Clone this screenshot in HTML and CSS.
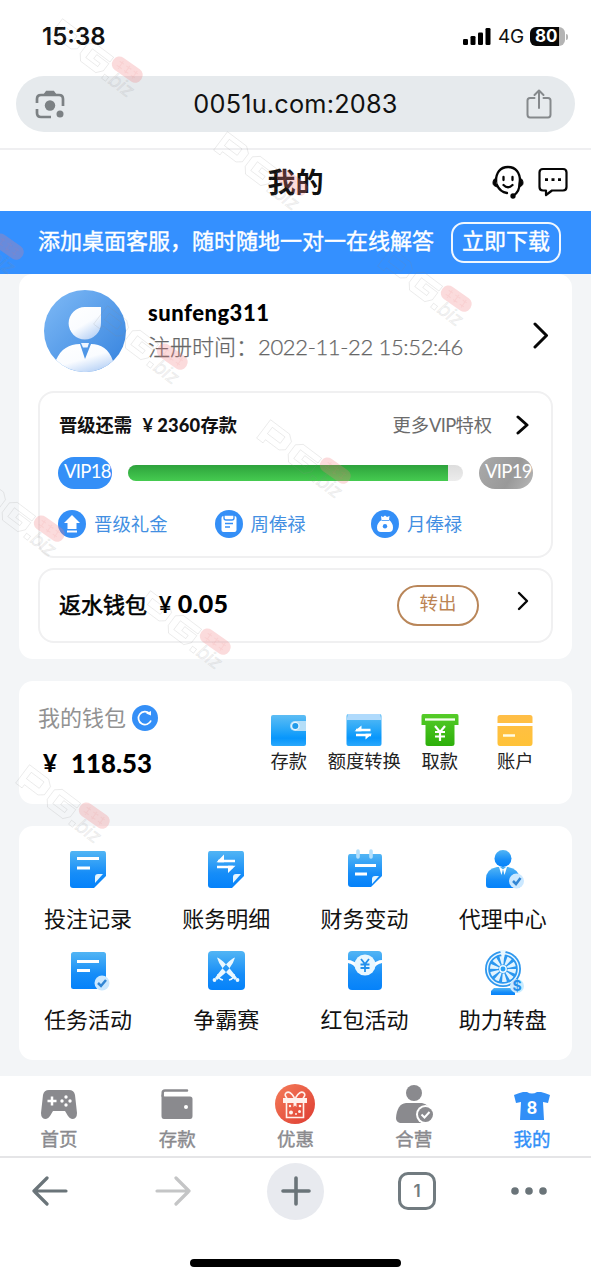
FILE: index.html
```html
<!DOCTYPE html>
<html lang="zh-CN">
<head>
<meta charset="utf-8">
<meta name="viewport" content="width=device-width, initial-scale=1">
<title>我的</title>
<link rel="stylesheet" href="styles.css">
</head>
<body>
<svg class="defs" width="0" height="0" aria-hidden="true">
  <defs>
    <linearGradient id="blue" x1="0" y1="0" x2="0" y2="1"><stop offset="0" stop-color="#52b5f4"/><stop offset=".6" stop-color="#168df8"/><stop offset="1" stop-color="#0582fa"/></linearGradient>
    <linearGradient id="sky" x1="0" y1="0" x2="0" y2="1"><stop offset="0" stop-color="#5dbdf4"/><stop offset=".45" stop-color="#2aa8f8"/><stop offset=".75" stop-color="#0796fc"/><stop offset="1" stop-color="#2ba8fb"/></linearGradient>
    <linearGradient id="green" x1="0" y1="0" x2="0" y2="1"><stop offset="0" stop-color="#55cc28"/><stop offset="1" stop-color="#2daf0b"/></linearGradient>
    <linearGradient id="gold" x1="0" y1="0" x2="0" y2="1"><stop offset="0" stop-color="#ffbe47"/><stop offset="1" stop-color="#ffc238"/></linearGradient>
    <linearGradient id="avatarBg" x1="0" y1="0" x2="1" y2="1"><stop offset="0" stop-color="#7fbaf6"/><stop offset="1" stop-color="#3482de"/></linearGradient>
    <linearGradient id="pale" x1="0" y1="0" x2=".6" y2="1"><stop offset="0" stop-color="#fff"/><stop offset=".6" stop-color="#fafcff"/><stop offset="1" stop-color="#bed6f7"/></linearGradient>
    <linearGradient id="red" x1="0" y1="0" x2="1" y2="1"><stop offset="0" stop-color="#f47c59"/><stop offset="1" stop-color="#de3c32"/></linearGradient>
  </defs>
</svg>

<header class="status">
  <span class="clock">15:38</span>
  <span class="signal"><svg width="28" height="18" viewBox="0 0 28 18"><rect x="0" y="11" width="5" height="6" rx="1.3"/><rect x="7.500" y="8" width="5" height="9" rx="1.3"/><rect x="15" y="4.500" width="5" height="12.500" rx="1.3"/><rect x="22.500" y="0" width="5" height="17" rx="1.3"/></svg></span>
  <span class="net">4G</span>
  <span class="battery">80</span><i class="nub"></i>
</header>

<div class="address">
  <svg width="30" height="30" viewBox="0 0 30 30" fill="none" stroke="#7c8184" stroke-width="2.700"><path d="M2 14V10Q2 6 6 6H24Q28 6 28 10V17M2 20V24Q2 28 6 28H16"/><path d="M9 6L11.500 2.500H18.500L21 6Z" fill="#7c8184" stroke-width="1.500"/><circle cx="15" cy="16.500" r="5.200" fill="#7c8184" stroke="none"/><circle cx="25" cy="25" r="3.500" fill="#7c8184" stroke="none"/></svg>
  <span class="url">0051u.com:2083</span>
  <svg width="26" height="30" viewBox="0 0 26 30" fill="none" stroke="#85898c" stroke-width="2" stroke-linecap="round" stroke-linejoin="round"><path d="M8.500 9H4Q1.500 9 1.500 11.500V25.500Q1.500 28.500 4 28.500H22Q24.500 28.500 24.500 25.500V11.500Q24.500 9 22 9H17.500M13 19V2M8.500 6L13 1.500L17.500 6"/></svg>
</div>

<div class="title-bar">
  <h1>我的</h1>
  <div class="title-icons">
    <svg width="32" height="34" viewBox="0 0 32 34" fill="none" stroke="#050505" stroke-width="2.300" stroke-linecap="round"><path d="M4 16C4 8 8 2 16 2S28 8 28 16C28 23 26 28 21 31"/><path d="M4 13C1.500 14 1 16 1 18S2 21 5 22ZM28 13C30.500 14 31 16 31 18S30 21 27 22Z" fill="#050505" stroke-width="1"/><path d="M5 20Q8 27 15 28M11.500 12V15M20.500 12V15M11.500 20Q16 24.500 20.500 20"/><circle cx="21" cy="31" r="1.500" fill="#050505"/></svg>
    <svg width="30" height="30" viewBox="0 0 30 30" fill="none" stroke="#050505" stroke-width="2.200" stroke-linejoin="round"><path d="M5 2H25Q28.500 2 28.500 5.500V20Q28.500 23.500 25 23.500H14L8 28V23.500H5Q1.500 23.500 1.500 20V5.500Q1.500 2 5 2Z"/><path d="M7 12.700h3M13.500 12.700h3M20 12.700h3" stroke-width="2.800"/></svg>
  </div>
</div>

<div class="banner"><span>添加桌面客服，随时随地一对一在线解答</span><a class="download">立即下载</a></div>

<main class="page">
  <section class="card account">
    <div class="profile">
      <svg width="82" height="82" viewBox="0 0 82 82"><circle cx="41" cy="41" r="41" fill="url(#avatarBg)"/><path d="M41 17H57V33A16.200 16.200 0 1 1 41 17Z" fill="url(#pale)"/><path d="M12 70C17 59 25 54 36 54L41 69L47 54C57 54 65 59 69 71A41 41 0 0 1 12 70Z" fill="url(#pale)"/><path d="M37 53H45L43.500 57.500H39Z" fill="#eef5ff"/></svg>
      <div class="who"><strong>sunfeng311</strong><span>注册时间：<b>2022-11-22 15:52:46</b></span></div>
      <svg class="chev" width="16" height="27" viewBox="0 0 16 27"><path d="M2 2L13.500 13.500L2 25"/></svg>
    </div>
    <div class="box vip">
      <div class="vip-head"><strong>晋级还需 <i class="yen">¥</i><b>2360</b>存款</strong><span>更多<b>VIP</b>特权</span><svg class="chev" width="14" height="20" viewBox="0 0 14 20"><path d="M2 2L11 10L2 18"/></svg></div>
      <div class="vip-bar"><span class="level">VIP18</span><div class="track"><div class="fill"></div></div><span class="level next">VIP19</span></div>
      <div class="perks">
        <div><svg width="28" height="28" viewBox="0 0 28 28"><circle cx="14" cy="14" r="14" fill="#348ff7"/><path d="M14 5L22 13H18.500V19H9.500V13H6Z" fill="#fff"/><path d="M9 21.500H19" stroke="#fff" stroke-width="2"/></svg>晋级礼金</div>
        <div><svg width="28" height="28" viewBox="0 0 28 28"><circle cx="14" cy="14" r="14" fill="#348ff7"/><rect x="6.500" y="6" width="15" height="16" rx="2" fill="#fff"/><path d="M9 5H19V8Q19 10 17 10H11Q9 10 9 8Z" fill="#fff" stroke="#348ff7" stroke-width="1.300"/><path d="M10 13.500H18M10 17H15" stroke="#348ff7" stroke-width="1.500"/></svg>周俸禄</div>
        <div><svg width="28" height="28" viewBox="0 0 28 28"><circle cx="14" cy="14" r="14" fill="#348ff7"/><path d="M10 6L12 7L14 5.500L16 7L18.500 6L18 10Q22 13 22 17.500Q22 22 18 22H10Q6 22 6 17.500Q6 13 10.500 10Z" fill="#fff"/><path d="M10.500 10.500H18" stroke="#348ff7" stroke-width=".8"/><circle cx="14" cy="16.300" r="2.200" fill="#348ff7"/></svg>月俸禄</div>
      </div>
    </div>
    <div class="box rebate"><strong>返水钱包 <i class="yen">¥</i><b>0.05</b></strong><a class="transfer">转出</a><svg class="chev thin" width="12" height="20" viewBox="0 0 12 20"><path d="M2 2L10 10L2 18"/></svg></div>
  </section>

  <section class="card wallet">
    <div class="balance">
      <div class="wallet-name">我的钱包<svg width="26" height="26" viewBox="0 0 26 26"><circle cx="13" cy="13" r="13" fill="#348ff7"/><path d="M17.500 8.500A6.500 6.500 0 1 0 19 15.500" fill="none" stroke="#fff" stroke-width="1.700"/><path d="M14 8.500L19 6V10.500Z" fill="#fff"/></svg></div>
      <div class="amount"><span>¥</span>118.53</div>
    </div>
    <div class="actions">
      <div><svg width="38" height="34" viewBox="0 0 38 34"><rect x="1" y="2" width="35" height="31" rx="2" fill="url(#sky)"/><path d="M36 8H25A5 5 0 0 0 25 18H36Z" fill="#b5def8"/><circle cx="25.300" cy="13" r="3.700" fill="#229bea" stroke="#e6f6ff" stroke-width="1.300"/></svg>存款</div>
      <div><svg width="38" height="34" viewBox="0 0 38 34"><rect x="1.500" y="1" width="35" height="32" rx="2" fill="url(#sky)"/><path d="M3 1H35L36.500 7H1.500Z" fill="#afdafc"/><path d="M25.500 17H11M11 22H26" stroke="#fff" stroke-width="2.500"/><path d="M9.500 18.200L16.500 12.500V18.200ZM27 20.800L20.500 26.500V20.800Z" fill="#fff"/></svg>额度转换</div>
      <div><svg width="38" height="34" viewBox="0 0 38 34"><path d="M2 1H36Q37.500 1 37.500 3V12H33.500V31Q33.500 33 31 33H7Q4.500 33 4.500 31V12H.5V3Q.5 1 2 1Z" fill="url(#green)"/><path d="M4 6.500H34" stroke="#f3ffed" stroke-width="2.300"/><path d="M14 13L19 19L24 13M14 19H24M14 23.500H24M19 19V28" fill="none" stroke="#fff" stroke-width="2.200"/></svg>取款</div>
      <div><svg width="38" height="34" viewBox="0 0 38 34"><path d="M4 2H34Q36.500 2 36.500 4.500V10H1.500V4.500Q1.500 2 4 2ZM1.500 13H36.500V30Q36.500 33 34 33H4Q1.500 33 1.500 30Z" fill="url(#gold)"/><path d="M7 22.500H19" stroke="#fffbe2" stroke-width="2.500"/></svg>账户</div>
    </div>
  </section>

  <section class="card menu">
    <div class="item"><svg width="44" height="44" viewBox="0 0 44 44"><path d="M6 3H38Q40 3 40 6V28L28 40H7Q4 40 4 37V6Q4 3 6 3Z" fill="url(#blue)"/><path d="M29 35V29Q29 26 32 26H37Z" fill="#e4f5ff"/><path d="M11 10.500H33M11 20H24" stroke="#fff" stroke-width="3"/></svg>投注记录</div>
    <div class="item"><svg width="44" height="44" viewBox="0 0 44 44"><path d="M6 3H38Q40 3 40 6V28L28 40H7Q4 40 4 37V6Q4 3 6 3Z" fill="url(#blue)"/><path d="M29 35V29Q29 26 32 26H37Z" fill="#e4f5ff"/><path d="M14 13H31M13 19H29" stroke="#fff" stroke-width="2.700"/><path d="M12.500 14.300L20 6.500V14.300ZM31.500 17.700L24 25V17.700Z" fill="#fff"/></svg>账务明细</div>
    <div class="item"><svg width="44" height="44" viewBox="0 0 44 44"><path d="M7 6H37Q39 6 39 9V28L28 39H8Q5 39 5 36V9Q5 6 7 6Z" fill="url(#blue)"/><path d="M15 3V9M28 3V9" stroke="#b5e0fc" stroke-width="3.600" stroke-linecap="round"/><path d="M29 36V31Q29 28 32 28H36Z" fill="#e4f5ff"/><path d="M12 17.500H33M12 26H24" stroke="#fff" stroke-width="3"/></svg>财务变动</div>
    <div class="item"><svg width="44" height="44" viewBox="0 0 44 44"><circle cx="22" cy="10.500" r="8.500" fill="url(#blue)"/><path d="M5 37V31Q5 21 16 19H27Q38 21 39 31V38Q39 40 37 40H8Q5 40 5 37Z" fill="url(#blue)"/><path d="M18 19L20.500 27L22 21L23.500 27L26 19H25L22.700 21H21.300L19 19Z" fill="#fff"/><circle cx="35.500" cy="33" r="7.500" fill="#cbe8ff"/><path d="M32 33L35 36L39.500 30" fill="none" stroke="#3286d4" stroke-width="2.500"/></svg>代理中心</div>
    <div class="item"><svg width="44" height="44" viewBox="0 0 44 44"><rect x="5" y="3" width="35" height="37" rx="2.500" fill="url(#blue)"/><path d="M11 12.500H33M11 21.500H24" stroke="#fff" stroke-width="3"/><circle cx="36" cy="34" r="7.500" fill="#cbe8ff"/><path d="M32 34L35 37L40 31" fill="none" stroke="#3286d4" stroke-width="2.500"/></svg>任务活动</div>
    <div class="item"><svg width="44" height="44" viewBox="0 0 44 44"><rect x="4" y="2" width="37" height="39" rx="4" fill="url(#blue)"/><path d="M13 8.500Q20 11 33 29L31 31Q16 20 13 8.500ZM31 8.500Q24 11 11 29L13 31Q28 20 31 8.500Z" fill="#eaf8ff"/><path d="M14 25Q14 30 19 31M30 25Q30 30 25 31" fill="none" stroke="#eaf8ff" stroke-width="1.500"/><circle cx="10.500" cy="31" r="1.900" fill="#eaf8ff"/><circle cx="33.500" cy="31" r="1.900" fill="#eaf8ff"/></svg>争霸赛</div>
    <div class="item"><svg width="44" height="44" viewBox="0 0 44 44"><rect x="5" y="2" width="34" height="39" rx="4" fill="url(#blue)"/><path d="M5 11C9 11 11 13 13 14V19C10 16 9 15 5 14ZM39 11C35 11 33 13 31 14V19C34 16 35 15 39 14Z" fill="#fff"/><circle cx="22" cy="16" r="10.500" fill="#eaf8ff"/><path d="M18 10L22 15L26 10M17.500 15.500H26.500M17.500 19H26.500M22 15V23" fill="none" stroke="#2490ec" stroke-width="1.800"/></svg>红包活动</div>
    <div class="item"><svg width="44" height="48" viewBox="0 0 44 48"><circle cx="22" cy="20" r="18" fill="#2f98ee"/><circle cx="22" cy="20" r="15.500" fill="#2b97ef" stroke="#eaf7ff" stroke-width="1.400"/><circle cx="22" cy="20" r="8.800" fill="none" stroke="#e2f4ff" stroke-width="8.500" stroke-dasharray="3.330 2.200"/><circle cx="22" cy="20" r="3.200" fill="#2ba0f4" stroke="#e9f7ff" stroke-width="1.500"/><path d="M19 1H25L23 9H21Z" fill="#eaf8ff"/><path d="M13 39H31L34 42V46H10V42Z" fill="url(#blue)"/><circle cx="36" cy="37" r="7" fill="#caebff"/><text x="36" y="42" text-anchor="middle" font-size="14" font-weight="700" font-family="Inter, sans-serif" fill="#268fea">$</text></svg>助力转盘</div>
  </section>
</main>

<nav class="tabs">
  <a><svg width="40" height="40" viewBox="0 0 40 40"><path d="M10 6H30Q35 6 36 11L38 29Q38 35 33 35Q31 35 29 32L26 27H14L11 32Q9 35 7 35Q2 35 2 29L4 11Q5 6 10 6Z" fill="#8a8a8e"/><path d="M13 12.500V21.500M8.500 17H17.500" stroke="#fff" stroke-width="2.500"/><g fill="#fff"><circle cx="27" cy="13" r="1.700"/><circle cx="23" cy="17" r="1.700"/><circle cx="31" cy="17" r="1.700"/><circle cx="27" cy="21" r="1.700"/></g></svg>首页</a>
  <a><svg width="40" height="40" viewBox="0 0 40 40"><path d="M30 6.500H8Q5.700 6.500 5.700 9V12" fill="none" stroke="#8a8a8e" stroke-width="2.500" stroke-linecap="round"/><path d="M4.500 10Q5 12.500 8 12.500H33Q35.500 12.500 35.500 15V32Q35.500 35 33 35H7Q4.500 35 4.500 32Z" fill="#8a8a8e"/><circle cx="29" cy="23" r="2" fill="#fff"/></svg>存款</a>
  <a><svg width="40" height="40" viewBox="0 0 40 40"><circle cx="20" cy="20" r="20" fill="url(#red)"/><rect x="8" y="14" width="24" height="5" fill="#fff1ec"/><path d="M19.500 14Q15 6 11 9Q9 11 12 14M20.500 14Q25 6 29 9Q31 11 28 14M11.500 19V33.500H28.500V19" fill="none" stroke="#fff1ec" stroke-width="1.600"/><path d="M18.500 18H21.500V23L20 21.500L18.500 23Z" fill="#fff1ec"/><g fill="#fff1ec"><circle cx="15" cy="22" r="1.200"/><circle cx="25" cy="22" r="1.300"/><circle cx="16" cy="28.500" r="2"/><circle cx="21" cy="30" r="1"/><circle cx="24.500" cy="27.500" r="1.500"/></g></svg>优惠</a>
  <a><svg width="40" height="40" viewBox="0 0 40 40"><circle cx="20" cy="9" r="8" fill="#8a8a8e"/><path d="M12 19H28Q36 20 37 31L35 39H6Q2 38 2 34Q3 20 12 19Z" fill="#8a8a8e"/><circle cx="31.500" cy="30.500" r="9.500" fill="#fff"/><circle cx="31.500" cy="30.500" r="7.500" fill="#8a8a8e"/><path d="M27.500 30.500L30.500 33.500L35.500 28" fill="none" stroke="#fff" stroke-width="2"/></svg>合营</a>
  <a class="active"><svg width="40" height="40" viewBox="0 0 40 40"><path d="M11 8H15Q20 11 25 8H29Q33 9 38 11L36 19L31 18L32 36H8L9 18L4 19L2 11Q7 9 11 8Z" fill="#318ff7"/><text x="20" y="30" text-anchor="middle" font-size="19" font-weight="600" font-family="Roboto, sans-serif" fill="#fff">8</text></svg>我的</a>
</nav>

<footer class="browser">
  <div class="tools">
    <span><svg width="36" height="30" viewBox="0 0 36 30" fill="none" stroke="#6a7479" stroke-width="3.200" stroke-linecap="round" stroke-linejoin="round"><path d="M34 15H2M15 2L2 15L15 28"/></svg></span>
    <span><svg width="36" height="30" viewBox="0 0 36 30" fill="none" stroke="#c4c5c6" stroke-width="3.200" stroke-linecap="round" stroke-linejoin="round"><path d="M2 15H34M21 2L34 15L21 28"/></svg></span>
    <span><span class="plus"><svg width="30" height="30" viewBox="0 0 30 30" stroke="#6a7479" stroke-width="3.600" stroke-linecap="round"><path d="M15 2V28M2 15H28"/></svg></span></span>
    <span><span class="count">1</span></span>
    <span><svg width="36" height="8" viewBox="0 0 36 8" fill="#6a7479"><circle cx="4" cy="4" r="3.800"/><circle cx="18" cy="4" r="3.800"/><circle cx="32" cy="4" r="3.800"/></svg></span>
  </div>
  <div class="home"></div>
</footer>

<svg class="marks" width="591" height="1280" viewBox="0 0 591 1280" aria-hidden="true">
  <g id="wm">
    <g transform="translate(95 57) rotate(37)" fill="none" stroke="#888" stroke-opacity=".17" stroke-width=".9">
      <path d="M-49 12V-11H-25L-19-6V4L-24 8H-41V12ZM-43-6H-27V2H-43Z"/>
      <path d="M15-11H-8L-14-6V6L-9 12H10L15 6V-3H0V2H8V6H-7V-5H15ZM18 8H23V13H18Z"/>
      <text x="25" y="13" font-family="Inter, sans-serif" font-size="19" font-style="italic" font-weight="300">biz</text>
    </g>
    <g transform="translate(127 70) rotate(35)"><rect x="-17" y="-8" width="34" height="15" rx="7" fill="#ef7f83" fill-opacity=".28"/><path d="M-11-3h5m3 0h6m3 0h5M-11 2h6m3 0h5m3 0h5M-8-5v9M0-5v9M9-5v9" stroke="#e8727a" stroke-opacity=".1"/></g>
  </g>
  <use href="#wm" x="165" y="113"/>
  <use href="#wm" x="-119" y="177"/>
  <use href="#wm" x="329" y="229"/>
  <use href="#wm" x="45" y="287"/>
  <use href="#wm" x="-78" y="459"/>
  <use href="#wm" x="208" y="401"/>
  <use href="#wm" x="88" y="572"/>
  <use href="#wm" x="-33" y="746"/>
</svg>
</body>
</html>
```
FILE: styles.css
```css
* { box-sizing: border-box; }
body {
  margin: 0; width: 591px; height: 1280px; overflow: hidden; position: relative;
  background: #fff; color: #111; line-height: 1; white-space: nowrap;
  font-family: Lato, "Noto Sans CJK SC", sans-serif;
}
svg { display: block; flex: none; }
i { font-style: normal; }
b { font-weight: inherit; }
.defs { position: absolute; }
.marks { position: absolute; left: 0; top: 0; pointer-events: none; }

.status { height: 76px; padding: 0 23px 3px 42px; display: flex; align-items: center; font-family: Inter, sans-serif; }
.clock { flex: 1; font-size: 24px; font-weight: 600; letter-spacing: 0; }
.net { margin-left: 7px; width: 32px; font-size: 19px; letter-spacing: -.3px; }
.battery {
  width: 35px; height: 19px; border-radius: 6px; color: #fff; font-size: 17px; font-weight: 700; line-height: 19px; padding-left: 5px;
  background: linear-gradient(90deg, #080808 82%, #b4b4b4 82%);
}
.nub { width: 2px; height: 6px; margin-left: 1px; border-radius: 0 2px 2px 0; background: #b4b4b4; }

.address { height: 56px; margin: 0 16px; padding: 0 23px 0 19px; border-radius: 28px; background: #e6eaed; display: flex; align-items: center; justify-content: space-between; }
.url { font: 400 25.3px/1 Inter, sans-serif; letter-spacing: .2px; }

.title-bar { height: 63px; margin-top: 16px; padding-top: 3px; border-top: 2px solid #efeff1; display: grid; grid-template-columns: 1fr auto 1fr; align-items: center; }
h1 { grid-column: 2; margin: 0; font-size: 28px; line-height: 1; font-weight: 700; }
.title-icons { display: flex; align-items: center; justify-content: flex-end; gap: 14px; padding-right: 23px; }

.banner { height: 63px; background: #3490ff; color: #fff; display: flex; align-items: center; padding-left: 38px; font-size: 22px; -webkit-text-stroke: .4px #fff; }
.download { margin-left: 17px; width: 110px; height: 41px; border: 2px solid #f0f7ff; border-radius: 13px; display: flex; align-items: center; justify-content: center; padding-bottom: 3px; }
.banner span { padding-bottom: 3px; }

.page { height: 802px; background: #f3f5f7; padding: 0 19px; }
.card { background: #fff; border-radius: 14px; }
.account { height: 385px; padding: 16px 19px 0; }
.profile { height: 101px; padding-left: 6px; display: flex; align-items: flex-start; }
.who { flex: 1; margin-left: 22px; padding-top: 11px; display: flex; flex-direction: column; }
.who strong { font-size: 22px; font-weight: 900; letter-spacing: .5px; line-height: 24px; color: #000; }
.who span { font-size: 22px; line-height: 24px; margin-top: 10px; color: #666; font-weight: 300; -webkit-text-stroke: .25px #666; }
.who b { letter-spacing: -.35px; }
.chev { fill: none; stroke: #070707; stroke-width: 3; stroke-linecap: round; stroke-linejoin: round; }
.thin { stroke-width: 2.4; }
.profile .chev { margin: 32px 4px 0 0; }
.box { border: 2px solid #f0f0f1; border-radius: 16px; }
.vip { height: 167px; padding: 0 18px; }
.vip-head { height: 64px; display: flex; align-items: center; font-size: 18.3px; padding: 0 3px 0 1px; }
.vip-head strong { flex: 1; font-weight: 700; }
.vip-head strong b { font-weight: 900; letter-spacing: .2px; }
.yen { display: inline-block; margin: 0 4px 0 6px; }
.vip-head span { color: #6b6b6b; font-weight: 400; margin-right: 24px; }
.vip-head span b { letter-spacing: -.7px; }
.vip-bar { display: flex; align-items: center; }
.level { width: 54px; height: 32px; border-radius: 16px; padding-left: 6px; font-size: 18.5px; line-height: 29px; letter-spacing: -.7px; color: #fff; background: #348ff7; }
.next { background: linear-gradient(120deg, #aaa, #999 60%, #b8b8b8); }
.track { width: 335px; height: 16px; margin: 0 16px; border-radius: 8px; overflow: hidden; background: linear-gradient(#ddd, #ececec); }
.fill { width: 320px; height: 100%; background: linear-gradient(#2da23c, #45cb50); }
.perks { display: grid; grid-template-columns: 156.5px 156.5px 1fr; margin-top: 21px; }
.perks div { display: flex; align-items: center; gap: 8px; font-size: 18.4px; color: #438fe2; }
.rebate { height: 75px; margin-top: 10px; padding: 0 22px 0 19px; display: flex; align-items: center; }
.rebate strong { flex: 1; font-size: 22px; font-weight: 400; color: #000; padding-bottom: 4px; -webkit-text-stroke: .6px #000; }
.rebate .yen { width: 15px; font-weight: 700; -webkit-text-stroke: 0; }
.rebate b { font-size: 25px; font-weight: 900; letter-spacing: .3px; -webkit-text-stroke: 0; }
.transfer { width: 82px; height: 41px; border: 2px solid #b98659; border-radius: 21px; color: #bc8454; font-size: 18.5px; display: flex; align-items: center; justify-content: center; padding-bottom: 4px; }
.rebate .chev { margin: -9px 0 0 38px; }

.wallet { height: 123px; margin-top: 22px; padding: 23px 19px 0; display: flex; }
.balance { width: 213px; }
.wallet-name { height: 28px; display: flex; align-items: center; gap: 6px; font-size: 22px; color: #929292; }
.amount { margin: 17px 0 0 5px; display: flex; align-items: center; font-size: 25.8px; line-height: 28px; font-weight: 900; color: #000; }
.amount span { width: 28px; font-size: 24px; }
.actions { display: grid; grid-template-columns: repeat(4, 75.5px); padding-top: 9px; }
.actions div { display: flex; flex-direction: column; align-items: center; gap: 5px; font-size: 18.3px; color: #222; }

.menu { height: 234px; margin-top: 22px; padding-top: 22px; display: grid; grid-template-columns: repeat(4, 1fr); grid-template-rows: 101px 101px; }
.item { display: flex; flex-direction: column; align-items: center; font-size: 22px; }
.item svg { margin-bottom: 16px; }
.item svg[height="48"] { margin-bottom: 12px; }

.tabs { height: 80px; display: grid; grid-template-columns: repeat(5, 1fr); padding-top: 8px; }
.tabs a { display: flex; flex-direction: column; align-items: center; gap: 6px; color: #8a8a8e; font-size: 18.5px; -webkit-text-stroke: .4px; }
.tabs svg { -webkit-text-stroke: 0; }
.tabs .active { color: #318ff7; }

.browser { border-top: 2px solid #e5e5e7; height: 124px; }
.tools { height: 66px; display: grid; grid-template-columns: 100px 145px 101px 142px 82px; }
.tools > span { display: grid; place-items: center; }
.plus { width: 57px; height: 57px; border-radius: 50%; background: #e8eaef; display: grid; place-items: center; }
.count { width: 38px; height: 38px; border: 3px solid #717b80; border-radius: 10px; display: grid; place-items: center; font: 600 17px/1 Inter, sans-serif; color: #717b80; }
.home { width: 211px; height: 8px; margin: 35px auto 0; border-radius: 4px; background: #000; }
```
